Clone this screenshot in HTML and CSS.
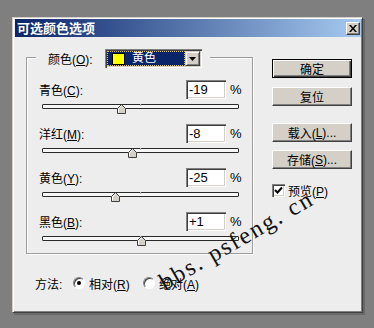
FILE: index.html
```html
<!DOCTYPE html>
<html lang="zh">
<head>
<meta charset="utf-8">
<title>可选颜色选项</title>
<link rel="stylesheet" href="styles.css">
</head>
<body>
<div class="dialog">
  <div class="titlebar">
    <span class="title">可选颜色选项</span>
    <span class="close"><svg width="8" height="7" viewBox="0 0 8 7"><path d="M0 0h2l2 2.5L6 0h2L5 3.5 8 7H6L4 4.5 2 7H0l3-3.5z" fill="#000"/></svg></span>
  </div>
  <div class="main">
    <div class="group">
      <div class="group-head">
        <span class="head-label">颜色(<u>O</u>):</span>
        <div class="select">
          <div class="sel-value"><span class="swatch"></span><span class="sel-text">黄色</span></div>
          <div class="sel-arrow"><svg width="7" height="4" viewBox="0 0 7 4"><path d="M0 0h7L3.5 4z" fill="#000"/></svg></div>
        </div>
      </div>
      <div class="row first">
        <div class="row-top"><span class="lbl">青色(<u>C</u>):</span><span class="num">-19</span><span class="pct">%</span></div>
        <div class="slider"><div class="track"></div><svg class="thumb" style="left:75px" width="9" height="10" viewBox="0 0 9 10"><path d="M0.5 9.5V4.5L4.5 0.5L8.5 4.5V9.5Z" fill="#d4d0c8" stroke="#404040"/><path d="M1.5 8.5V4.9L4.5 1.9" fill="none" stroke="#fff"/></svg></div>
      </div>
      <div class="row">
        <div class="row-top"><span class="lbl">洋红(<u>M</u>):</span><span class="num">-8</span><span class="pct">%</span></div>
        <div class="slider"><div class="track"></div><svg class="thumb" style="left:86px" width="9" height="10" viewBox="0 0 9 10"><path d="M0.5 9.5V4.5L4.5 0.5L8.5 4.5V9.5Z" fill="#d4d0c8" stroke="#404040"/><path d="M1.5 8.5V4.9L4.5 1.9" fill="none" stroke="#fff"/></svg></div>
      </div>
      <div class="row">
        <div class="row-top"><span class="lbl">黄色(<u>Y</u>):</span><span class="num">-25</span><span class="pct">%</span></div>
        <div class="slider"><div class="track"></div><svg class="thumb" style="left:69px" width="9" height="10" viewBox="0 0 9 10"><path d="M0.5 9.5V4.5L4.5 0.5L8.5 4.5V9.5Z" fill="#d4d0c8" stroke="#404040"/><path d="M1.5 8.5V4.9L4.5 1.9" fill="none" stroke="#fff"/></svg></div>
      </div>
      <div class="row last">
        <div class="row-top"><span class="lbl">黑色(<u>B</u>):</span><span class="num">+1</span><span class="pct">%</span></div>
        <div class="slider"><div class="track"></div><svg class="thumb" style="left:95px" width="9" height="10" viewBox="0 0 9 10"><path d="M0.5 9.5V4.5L4.5 0.5L8.5 4.5V9.5Z" fill="#d4d0c8" stroke="#404040"/><path d="M1.5 8.5V4.9L4.5 1.9" fill="none" stroke="#fff"/></svg></div>
      </div>
    </div>
    <div class="buttons">
      <div class="btn default">确定</div>
      <div class="btn b2">复位</div>
      <div class="btn b3">载入(<u>L</u>)...</div>
      <div class="btn b4">存储(<u>S</u>)...</div>
      <div class="check-row">
        <span class="checkbox"><svg width="9" height="9" viewBox="0 0 9 9"><path d="M1 4l2.5 2.5L8 1.5" fill="none" stroke="#000" stroke-width="2"/></svg></span>
        <span class="check-label">预览(<u>P</u>)</span>
      </div>
    </div>
  </div>
  <div class="method">
    <span class="m-label">方法:</span>
    <span class="opt opt1"><span class="radio on"></span><span class="opt-text">相对(<u>R</u>)</span></span>
    <span class="opt"><span class="radio"></span><span class="opt-text">绝对(<u>A</u>)</span></span>
  </div>
  <div class="watermark">bbs. psfeng. cn</div>
</div>
</body>
</html>
```
FILE: styles.css
```css
* { box-sizing: border-box; }
body {
  margin: 0;
  width: 374px;
  height: 328px;
  overflow: hidden;
  background: #7f7f7f;
  font-family: "Liberation Sans", "Noto Sans CJK SC", sans-serif;
  font-size: 12px;
  color: #000;
}
u { text-decoration: underline; text-underline-offset: 1px; }
.dialog {
  position: relative;
  margin: 17px 0 0 12px;
  width: 351px;
  height: 296px;
  background: #ededed;
  border: 1px solid;
  border-color: #d4d0c8 #404040 #404040 #d4d0c8;
  box-shadow: inset 1px 1px 0 #fff, inset -1px -1px 0 #808080, 2px 2px 0 rgba(0,0,0,0.18);
  padding: 1px 1px 0 2px;
}
.titlebar {
  height: 18px;
  display: flex;
  align-items: center;
  justify-content: space-between;
  background: linear-gradient(to right, #0a246a, #a6caf0);
  padding: 0 1px 0 2px;
}
.title {
  color: #fff;
  font-family: "Noto Sans CJK SC", sans-serif;
  font-weight: bold;
  font-size: 13px;
  line-height: 18px;
}
.close {
  width: 14px;
  height: 13px;
  display: flex;
  align-items: center;
  justify-content: center;
  background: #d4d0c8;
  border: 1px solid;
  border-color: #fff #404040 #404040 #fff;
  box-shadow: inset -1px -1px 0 #808080;
}
.main {
  display: flex;
  align-items: flex-start;
  padding-left: 11px;
}
.group {
  width: 227px;
  height: 197px;
  margin-top: 20px;
  border: 1px solid #9c9c9c;
  box-shadow: inset 1px 1px 0 #fff, 1px 1px 0 #fff;
}
.group-head {
  display: flex;
  align-items: center;
  width: fit-content;
  height: 19px;
  margin: -9px 0 0 9px;
  padding: 0 8px 0 12px;
  background: #ededed;
}
.head-label { width: 57px; }
.select {
  display: flex;
  width: 97px;
  height: 19px;
  padding: 2px;
  background: #fff;
  box-shadow: inset 1px 1px 0 #808080, inset 2px 2px 0 #404040, inset -1px -1px 0 #fff, inset -2px -2px 0 #d4d0c8;
}
.sel-value {
  flex: 1;
  display: flex;
  align-items: center;
  background: #0a246a;
  outline: 1px dotted #d0c060;
  outline-offset: -1px;
  padding-left: 5px;
}
.swatch {
  width: 13px;
  height: 12px;
  background: #ffff00;
  border: 1px solid #000;
}
.sel-text {
  color: #fff;
  margin-left: 7px;
  font-size: 12px;
  line-height: 15px;
}
.sel-arrow {
  width: 15px;
  display: flex;
  align-items: center;
  justify-content: center;
  background: #d4d0c8;
  border: 1px solid;
  border-color: #d4d0c8 #404040 #404040 #d4d0c8;
  box-shadow: inset 1px 1px 0 #fff, inset -1px -1px 0 #808080;
}
.row { height: 34px; margin-bottom: 10px; }
.row.first { margin-top: 12px; }
.row.last { margin-bottom: 0; }
.row-top {
  display: flex;
  align-items: center;
  height: 19px;
  padding-left: 12px;
}
.lbl { width: 147px; }
.num {
  width: 40px;
  height: 19px;
  padding: 0 0 0 3px;
  font-size: 13px;
  line-height: 19px;
  background: #fff;
  box-shadow: inset 1px 1px 0 #808080, inset 2px 2px 0 #404040, inset -1px -1px 0 #fff, inset -2px -2px 0 #d4d0c8;
}
.pct { margin-left: 4px; font-size: 13px; }
.slider {
  position: relative;
  width: 197px;
  height: 10px;
  margin: 5px 0 0 15px;
}
.track {
  position: relative;
  margin-top: 4px;
  height: 5px;
  border: 1px solid #2a2a2a;
  border-radius: 1px;
  background: #f7f7f7;
}
.track::after {
  content: "";
  position: absolute;
  left: 97px;
  top: -1px;
  width: 1px;
  height: 2px;
  background: #b8b8b8;
}
.thumb { position: absolute; top: 0; }
.buttons {
  display: flex;
  flex-direction: column;
  width: 80px;
  margin: 22px 0 0 19px;
}
.btn {
  height: 19px;
  display: flex;
  align-items: center;
  justify-content: center;
  background: #d4d0c8;
  border: 1px solid;
  border-color: #fff #404040 #404040 #fff;
  box-shadow: inset -1px -1px 0 #808080;
}
.btn.default {
  border-color: #000;
  box-shadow: inset 1px 1px 0 #fff, inset -1px -1px 0 #404040, inset -2px -2px 0 #808080;
}
.b2 { margin-top: 9px; }
.b3 { margin-top: 17px; }
.b4 { margin-top: 8px; }
.check-row {
  display: flex;
  align-items: center;
  height: 13px;
  margin-top: 15px;
}
.checkbox {
  width: 13px;
  height: 13px;
  display: flex;
  align-items: center;
  justify-content: center;
  background: #fff;
  box-shadow: inset 1px 1px 0 #808080, inset 2px 2px 0 #404040, inset -1px -1px 0 #fff, inset -2px -2px 0 #d4d0c8;
}
.check-label { margin-left: 3px; }
.method {
  display: flex;
  align-items: center;
  height: 14px;
  margin: 22px 0 0 20px;
}
.m-label { width: 38px; }
.opt { display: flex; align-items: center; }
.opt1 { width: 70px; }
.radio {
  position: relative;
  width: 12px;
  height: 12px;
  border-radius: 50%;
  background: #fff;
  border: 1px solid;
  border-color: #808080 #fff #fff #808080;
  box-shadow: inset 1px 1px 0 #404040;
}
.radio.on::after {
  content: "";
  position: absolute;
  left: 3px;
  top: 3px;
  width: 4px;
  height: 4px;
  border-radius: 50%;
  background: #000;
}
.opt-text { margin-left: 4px; }
.watermark {
  position: absolute;
  left: 154px;
  top: 252px;
  font-family: "Liberation Serif", serif;
  font-size: 24px;
  line-height: 24px;
  letter-spacing: 2px;
  color: #111;
  white-space: nowrap;
  transform: rotate(-30deg);
  transform-origin: 0 100%;
}
```
